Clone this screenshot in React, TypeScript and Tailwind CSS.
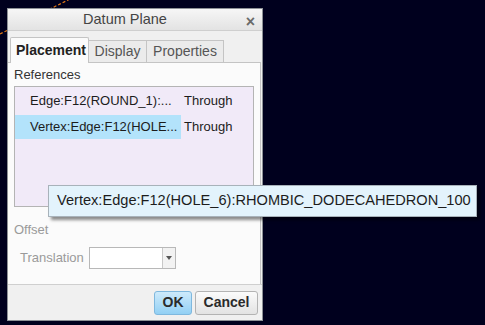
import React from 'react';

const font = { fontFamily: '"Liberation Sans", Arial, sans-serif' };

export default function App() {
  return (
    <div className="relative w-[485px] h-[325px] overflow-hidden bg-[#00001e]" style={font}>
      <svg className="absolute left-0 top-0" width="485" height="325">
        <line x1="0" y1="34" x2="72" y2="-2" stroke="#e07818" strokeWidth="1.2" strokeDasharray="3 2" />
      </svg>

      <div className="relative pl-[7px] pt-[8px]">
        <div className="w-[256px] h-[313px] border border-[#8d9196] bg-[#f0f0f0] flex flex-col">
          {/* title bar */}
          <div className="h-[22px] flex items-center justify-center relative pr-[20px] bg-gradient-to-b from-[#f6f6f6] to-[#e3e3e3] border-b border-[#cfcfcf]">
            <span className="text-[14.5px] text-[#444]">Datum Plane</span>
            <span className="absolute right-[7px] top-[1px] text-[16px] font-bold text-[#6a6a6a]">×</span>
          </div>

          {/* tabs */}
          <div className="flex items-end pl-[2px] pt-[5px] h-[31px]">
            <div className="h-[26px] w-[79px] bg-[#fbfbfb] border border-b-0 border-[#c4c4c4] rounded-t-[2px] flex items-center pl-[5px] text-[14px] font-bold text-[#222] relative top-[1px]">
              Placement
            </div>
            <div className="h-[22px] w-[58px] bg-[#ebebeb] border border-l-0 border-b-0 border-[#c4c4c4] flex items-center justify-center text-[14px] text-[#555]">
              Display
            </div>
            <div className="h-[22px] w-[77px] bg-[#ebebeb] border border-l-0 border-b-0 border-[#c4c4c4] flex items-center justify-center text-[14px] text-[#555]">
              Properties
            </div>
          </div>

          {/* panel */}
          <div className="h-[222px] bg-[#fbfbfb] border-t border-r border-[#c4c4c4] mr-[1px] flex flex-col px-[6px]">
            <div className="text-[13px] text-[#333] pt-[2px] h-[23px]">References</div>
            <div className="h-[121px] bg-[#f1eaf8] border border-[#b4b4b4] w-[240px] pt-[2px]">
              <div className="flex h-[24px] items-center text-[13px] text-[#1c1c1c]">
                <span className="w-[166px] pl-[15px]">Edge:F12(ROUND_1):...</span>
                <span className="pl-[3px]">Through</span>
              </div>
              <div className="flex h-[24px] items-center text-[13px] text-[#1c1c1c] mt-[2px]">
                <span className="w-[166px] pl-[15px] h-full flex items-center bg-[#b3e3fb]">Vertex:Edge:F12(HOLE...</span>
                <span className="pl-[3px]">Through</span>
              </div>
            </div>
            <div className="text-[13px] text-[#9a9a9a] mt-[13px]">Offset</div>
            <div className="flex items-center mt-[7px]">
              <span className="text-[13px] text-[#9a9a9a] pl-[6px] w-[75px]">Translation</span>
              <div className="h-[22px] w-[87px] border border-[#b8b8b8] bg-white flex justify-end">
                <div className="w-[13px] h-full border-l border-[#c8c8c8] bg-[#f2f2f2] flex items-center justify-center">
                  <div className="w-0 h-0 border-l-[3.5px] border-r-[3.5px] border-t-[4px] border-l-transparent border-r-transparent border-t-[#555]" />
                </div>
              </div>
            </div>
          </div>

          {/* footer */}
          <div className="flex-1 border-t border-[#cfcfcf] flex items-center justify-end gap-[3px] pr-[4px]">
            <button className="h-[24px] w-[38px] rounded-[3px] border border-[#7fb8de] bg-gradient-to-b from-[#cdeafb] to-[#92d0f4] text-[14px] font-bold text-[#2a2a2a]">
              OK
            </button>
            <button className="h-[24px] w-[63px] rounded-[3px] border border-[#b3b3b3] bg-gradient-to-b from-[#fbfbfb] to-[#e3e3e3] text-[14px] font-bold text-[#2a2a2a]">
              Cancel
            </button>
          </div>
        </div>
      </div>

      {/* tooltip */}
      <div className="absolute left-[48px] top-[185px] h-[32px] w-[429px] bg-[#e3f3fc] border border-[#a8b2ba] shadow-[3px_3px_3px_rgba(0,0,0,0.45)] flex items-center pl-[8px] text-[14.6px] text-[#1c1c1c]">
        Vertex:Edge:F12(HOLE_6):RHOMBIC_DODECAHEDRON_100
      </div>
    </div>
  );
}
